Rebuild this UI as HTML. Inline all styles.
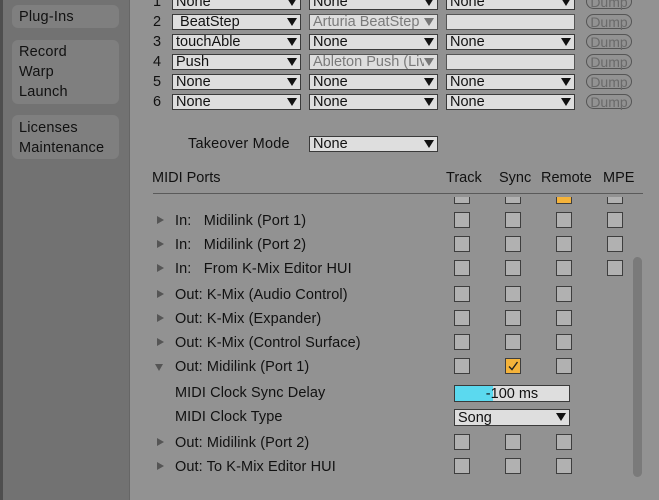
<!DOCTYPE html>
<html><head><style>
body{margin:0;width:659px;height:500px;overflow:hidden;background:#929292;font-family:"Liberation Sans",sans-serif;font-size:14.5px;color:#111;position:relative}
.a{position:absolute}
.side{left:0;top:0;width:129px;height:500px;background:#727272;border-right:1px solid #666}
.strip{left:0;top:0;width:3px;height:500px;background:#4e4e4e}
.tab{position:absolute;left:12px;width:107px;background:#7f7f7f;border-radius:6px;font-size:14.5px;line-height:20px;padding-left:7px;box-sizing:border-box;letter-spacing:0.2px}
.sel{position:absolute;height:16px;width:129px;box-sizing:border-box;border:1px solid #3a3a3a;background:#dedede;font-size:14.5px;line-height:15px;padding-left:3px;overflow:hidden;white-space:nowrap}
.sel.g{color:#7a7a7a;border-color:#555}
.sel.e{border-color:#555}
.sel .t{position:absolute;right:3px;top:3px;width:0;height:0;border-left:5px solid transparent;border-right:5px solid transparent;border-top:8px solid #111;background:#dedede}
.sel.g .t{border-top-color:#777}
.dump{position:absolute;left:586px;width:46px;height:15px;border:1px solid #555;border-radius:8px;box-sizing:border-box;color:#6a6a6a;font-size:14px;line-height:14px;text-align:center}
.num{position:absolute;left:153px}
.cb{position:absolute;width:16px;height:16px;box-sizing:border-box;border:1px solid #3e3e3e;background:#b1b1b1}
.tri{position:absolute;left:157px;width:0;height:0;border-top:4.5px solid transparent;border-bottom:4.5px solid transparent;border-left:7px solid #555}
.row{position:absolute;left:175px;letter-spacing:0.1px}
</style></head><body>
<div class="a side"></div><div class="a strip"></div>
<div class="tab" style="top:5px;height:23px;line-height:25px">Plug-Ins</div>
<div class="tab" style="top:40px;height:64px;padding-top:2px">Record<br>Warp<br>Launch</div>
<div class="tab" style="top:115px;height:44px;padding-top:3px">Licenses<br>Maintenance</div>

<div class="num" style="top:-6px">1</div>
<div class="sel" style="left:172px;top:-6px">None<span class="t"></span></div>
<div class="sel" style="left:309px;top:-6px">None<span class="t"></span></div>
<div class="sel" style="left:446px;top:-6px">None<span class="t"></span></div>
<div class="dump" style="top:-6px">Dump</div>

<div class="num" style="top:14px">2</div>
<div class="sel" style="left:172px;top:14px">&nbsp;BeatStep<span class="t"></span></div>
<div class="sel g" style="left:309px;top:14px">Arturia BeatStep<span class="t"></span></div>
<div class="sel e" style="left:446px;top:14px"></div>
<div class="dump" style="top:14px">Dump</div>

<div class="num" style="top:34px">3</div>
<div class="sel" style="left:172px;top:34px">touchAble<span class="t"></span></div>
<div class="sel" style="left:309px;top:34px">None<span class="t"></span></div>
<div class="sel" style="left:446px;top:34px">None<span class="t"></span></div>
<div class="dump" style="top:34px">Dump</div>

<div class="num" style="top:54px">4</div>
<div class="sel" style="left:172px;top:54px">Push<span class="t"></span></div>
<div class="sel g" style="left:309px;top:54px">Ableton Push (Liv<span class="t"></span></div>
<div class="sel e" style="left:446px;top:54px"></div>
<div class="dump" style="top:54px">Dump</div>

<div class="num" style="top:74px">5</div>
<div class="sel" style="left:172px;top:74px">None<span class="t"></span></div>
<div class="sel" style="left:309px;top:74px">None<span class="t"></span></div>
<div class="sel" style="left:446px;top:74px">None<span class="t"></span></div>
<div class="dump" style="top:74px">Dump</div>

<div class="num" style="top:94px">6</div>
<div class="sel" style="left:172px;top:94px">None<span class="t"></span></div>
<div class="sel" style="left:309px;top:94px">None<span class="t"></span></div>
<div class="sel" style="left:446px;top:94px">None<span class="t"></span></div>
<div class="dump" style="top:94px">Dump</div>

<div class="a" style="left:188px;top:136px;letter-spacing:0.2px">Takeover Mode</div>
<div class="sel" style="left:309px;top:136px">None<span class="t"></span></div>

<div class="a" style="left:152px;top:170px">MIDI Ports</div>
<div class="a" style="left:446px;top:170px">Track</div>
<div class="a" style="left:499px;top:170px">Sync</div>
<div class="a" style="left:541px;top:170px">Remote</div>
<div class="a" style="left:603px;top:170px">MPE</div>
<div class="a" style="left:153px;top:193px;width:490px;height:1px;background:#5a5a5a"></div>

<div class="cb" style="left:454px;top:196px;height:8px;border-top:none"></div>
<div class="cb" style="left:505px;top:196px;height:8px;border-top:none"></div>
<div class="cb" style="left:556px;top:196px;height:8px;border-top:none;background:#f5b33a"></div>
<div class="cb" style="left:607px;top:196px;height:8px;border-top:none"></div>
<div class="a" style="left:153px;top:194px;width:490px;height:3px;background:#929292"></div>

<div class="tri" style="top:216px"></div><div class="row" style="top:213px">In:&nbsp;&nbsp;&nbsp;Midilink (Port 1)</div>
<div class="tri" style="top:240px"></div><div class="row" style="top:237px">In:&nbsp;&nbsp;&nbsp;Midilink (Port 2)</div>
<div class="tri" style="top:264px"></div><div class="row" style="top:261px">In:&nbsp;&nbsp;&nbsp;From K-Mix Editor HUI</div>
<div class="tri" style="top:290px"></div><div class="row" style="top:287px">Out: K-Mix (Audio Control)</div>
<div class="tri" style="top:314px"></div><div class="row" style="top:311px">Out: K-Mix (Expander)</div>
<div class="tri" style="top:338px"></div><div class="row" style="top:335px">Out: K-Mix (Control Surface)</div>
<div class="a" style="left:155px;top:364px;width:0;height:0;border-left:4.5px solid transparent;border-right:4.5px solid transparent;border-top:7px solid #555"></div>
<div class="row" style="top:359px">Out: Midilink (Port 1)</div>
<div class="row" style="top:385px">MIDI Clock Sync Delay</div>
<div class="row" style="top:409px">MIDI Clock Type</div>
<div class="tri" style="top:438px"></div><div class="row" style="top:435px">Out: Midilink (Port 2)</div>
<div class="tri" style="top:462px"></div><div class="row" style="top:459px">Out: To K-Mix Editor HUI</div>

<div class="cb" style="left:454px;top:212px"></div><div class="cb" style="left:505px;top:212px"></div><div class="cb" style="left:556px;top:212px"></div><div class="cb" style="left:607px;top:212px"></div>
<div class="cb" style="left:454px;top:236px"></div><div class="cb" style="left:505px;top:236px"></div><div class="cb" style="left:556px;top:236px"></div><div class="cb" style="left:607px;top:236px"></div>
<div class="cb" style="left:454px;top:260px"></div><div class="cb" style="left:505px;top:260px"></div><div class="cb" style="left:556px;top:260px"></div><div class="cb" style="left:607px;top:260px"></div>
<div class="cb" style="left:454px;top:286px"></div><div class="cb" style="left:505px;top:286px"></div><div class="cb" style="left:556px;top:286px"></div>
<div class="cb" style="left:454px;top:310px"></div><div class="cb" style="left:505px;top:310px"></div><div class="cb" style="left:556px;top:310px"></div>
<div class="cb" style="left:454px;top:334px"></div><div class="cb" style="left:505px;top:334px"></div><div class="cb" style="left:556px;top:334px"></div>
<div class="cb" style="left:454px;top:358px"></div>
<div class="cb" style="left:505px;top:358px;background:#f5b33a"><svg width="14" height="14" style="position:absolute;left:0;top:0"><path d="M3 7.5 L6 10.5 L11.5 3" stroke="#222" stroke-width="1.4" fill="none"/></svg></div>
<div class="cb" style="left:556px;top:358px"></div>
<div class="cb" style="left:454px;top:434px"></div><div class="cb" style="left:505px;top:434px"></div><div class="cb" style="left:556px;top:434px"></div>
<div class="cb" style="left:454px;top:458px"></div><div class="cb" style="left:505px;top:458px"></div><div class="cb" style="left:556px;top:458px"></div>

<div class="a" style="left:454px;top:385px;width:116px;height:17px;box-sizing:border-box;border:1px solid #3a3a3a;background:linear-gradient(to right,#5bd9ef 0,#5bd9ef 38px,#dedede 38px);line-height:16px;text-align:center">-100 ms</div>
<div class="sel" style="left:454px;top:409px;width:116px;height:17px;line-height:16px">Song<span class="t"></span></div>

<div class="a" style="left:633px;top:257px;width:9px;height:220px;background:#7a7a7a;border-radius:5px"></div>
</body></html>
